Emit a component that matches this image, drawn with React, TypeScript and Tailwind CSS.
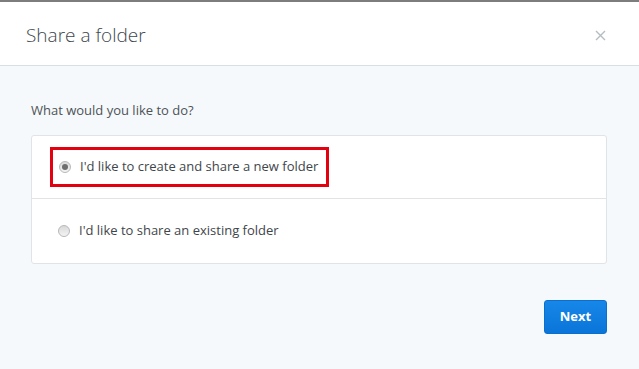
export default function App() {
  return (
    <div
      className="w-[639px] h-[369px] overflow-hidden bg-[#7d7d7d] flex flex-col"
      style={{ fontFamily: '"Open Sans", "Liberation Sans", sans-serif' }}
    >
      <div className="h-[2px] shrink-0" />
      <div className="flex-1 flex flex-col bg-[#f6f9fc]">
        <div className="h-[64px] shrink-0 bg-white border-b border-[#d9dee3] flex items-center justify-between pl-[26px] pr-[33px] pt-[3px]">
          <h1 className="text-[19px] font-light text-[#3d464d]">Share a folder</h1>
          <svg width="11" height="11" viewBox="0 0 11 11" className="text-[#b5bcc2]">
            <path d="M1 1L10 10M10 1L1 10" stroke="currentColor" strokeWidth="1.4" />
          </svg>
        </div>
        <div className="pl-[31px] pr-[32px] pt-[35px]">
          <p className="text-[13px] text-[#4d5357] leading-[18px]">What would you like to do?</p>
          <div className="mt-[16px] bg-white border border-[#e1e4e7] rounded-[3px]">
            <div className="h-[63px] border-b border-[#e1e4e7] flex items-center pl-[18px]">
              <div className="h-[40px] w-[279px] border-[3px] border-[#e3000f] flex items-center pl-[6px] gap-[9px]">
                <span className="w-[12px] h-[12px] rounded-full bg-gradient-to-b from-[#d9d9d9] to-[#f4f4f4] border border-[#b8b8b8] flex items-center justify-center">
                  <span className="w-[6px] h-[6px] rounded-full bg-[#6e6e6e]" />
                </span>
                <span className="text-[13px] text-[#3f464b]">I'd like to create and share a new folder</span>
              </div>
            </div>
            <div className="h-[64px] flex items-center pl-[26px] gap-[9px]">
              <span className="w-[12px] h-[12px] rounded-full bg-gradient-to-b from-[#d9d9d9] to-[#f4f4f4] border border-[#b8b8b8]" />
              <span className="text-[13px] text-[#3f464b]">I'd like to share an existing folder</span>
            </div>
          </div>
          <div className="flex justify-end mt-[36px]">
            <button className="w-[63px] h-[34px] rounded-[3px] bg-gradient-to-b from-[#1687e8] to-[#0a75d8] border border-[#0a6fcf] text-white text-[13px] font-bold">
              Next
            </button>
          </div>
        </div>
      </div>
    </div>
  );
}
